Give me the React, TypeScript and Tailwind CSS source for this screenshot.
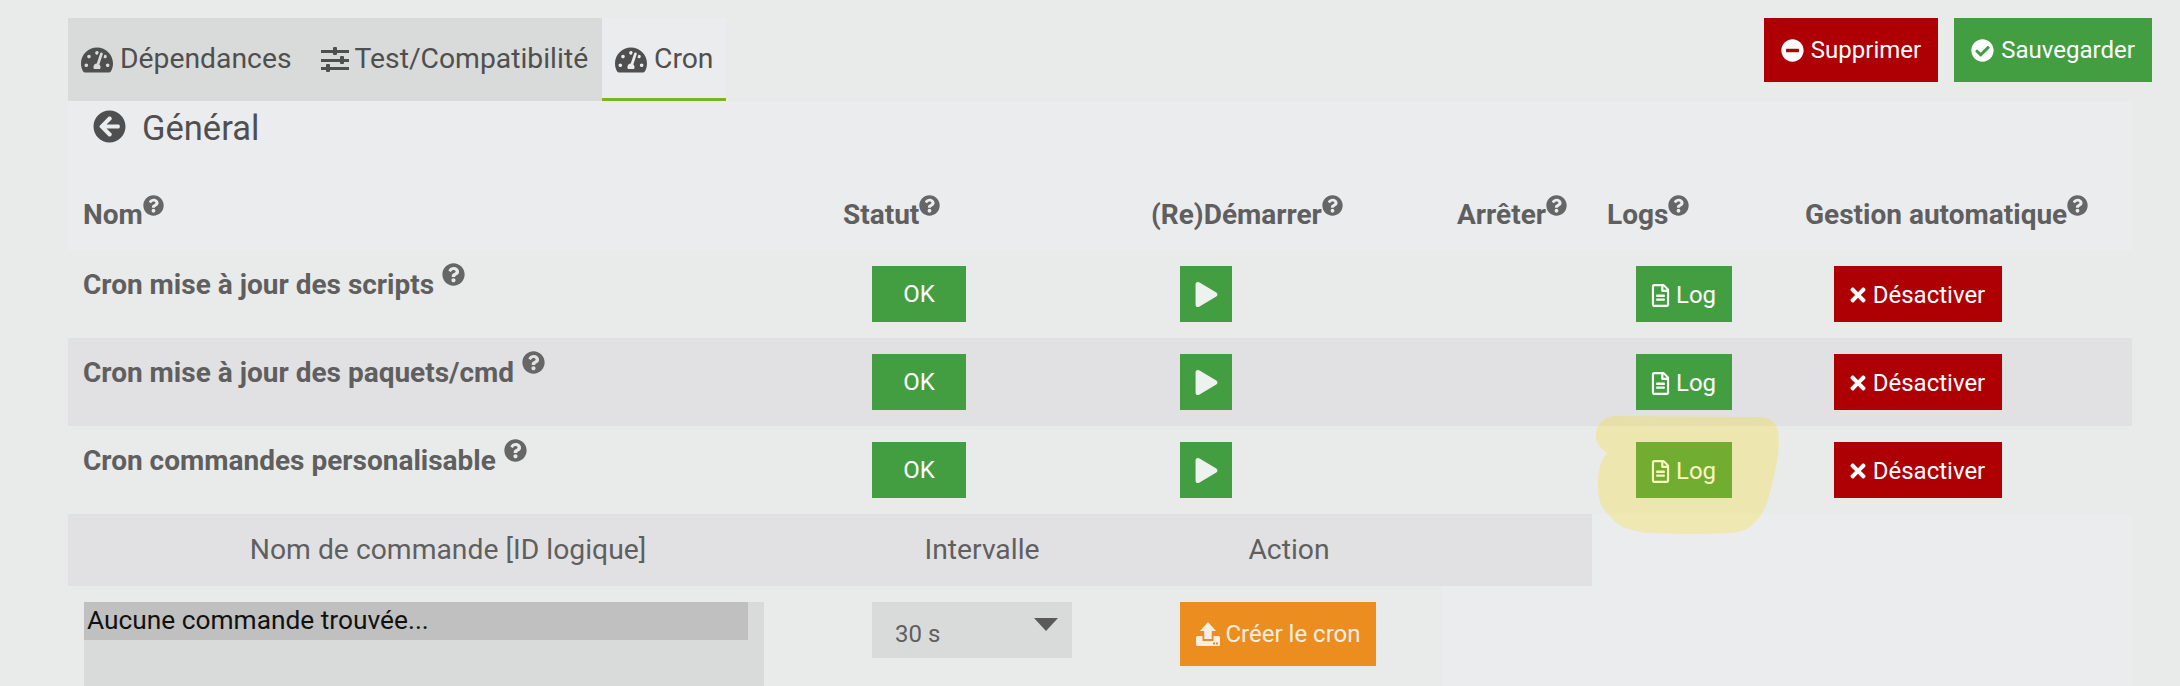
import React from "react";
import {
  FaArrowCircleLeft,
  FaCheckCircle,
  FaMinusCircle,
  FaPlay,
  FaQuestionCircle,
  FaRegFileAlt,
  FaTachometerAlt,
  FaTimes,
} from "react-icons/fa";

const cols = "grid grid-cols-[760px_308px_306px_150px_198px_342px]";

function SlidersIcon() {
  return (
    <svg viewBox="0 0 28 25" className="w-[28px] h-[25px] ml-[29px] mr-[6px]" fill="currentColor">
      <rect x="0" y="3" width="28" height="3" />
      <rect x="12" y="0" width="4" height="8" rx="1" />
      <rect x="0" y="12" width="28" height="3" />
      <rect x="19" y="9" width="4" height="8" rx="1" />
      <rect x="0" y="20" width="28" height="3" />
      <rect x="5" y="17" width="4" height="8" rx="1" />
    </svg>
  );
}

function UploadIcon() {
  return (
    <svg viewBox="0 0 24 24" className="w-[24px] h-[24px]" fill="currentColor">
      <path d="M12 0L20 9H15.7V17H8.3V9H4Z" />
      <path d="M1.5 14H6.5V19H17.5V14H22.5A1.5 1.5 0 0 1 24 15.5V22.5A1.5 1.5 0 0 1 22.5 24H1.5A1.5 1.5 0 0 1 0 22.5V15.5A1.5 1.5 0 0 1 1.5 14Z" />
      <rect x="17" y="20.5" width="2" height="2" fill="#ec8d20" />
      <rect x="20" y="20.5" width="2" height="2" fill="#ec8d20" />
    </svg>
  );
}

function HeadCell({ label, help = true }: { label: string; help?: boolean }) {
  return (
    <div className="flex items-start pl-[15px] pt-[49px] text-[28px] leading-[32px] font-bold text-[#5f5f5f]">
      <span>{label}</span>
      {help && <FaQuestionCircle className="text-[21px] mt-[-4px] text-[#666666]" />}
    </div>
  );
}

function Btn({ className, children }: { className: string; children: React.ReactNode }) {
  return (
    <div className={`flex items-center justify-center h-[56px] text-white text-[24px] ${className}`}>
      {children}
    </div>
  );
}

function CronRow({ name, bg }: { name: string; bg: string }) {
  return (
    <div className={`${cols} h-[88px] ${bg}`}>
      <div className="flex items-start pl-[15px] pt-[19px] text-[28px] leading-[32px] font-bold text-[#5f5f5f]">
        <span>{name}</span>
        <FaQuestionCircle className="text-[23px] ml-[8px] mt-[-6px] text-[#666666]" />
      </div>
      <div className="pl-[44px] pt-[16px]">
        <Btn className="w-[94px] bg-[#439e41]">OK</Btn>
      </div>
      <div className="pl-[44px] pt-[16px]">
        <Btn className="w-[52px] bg-[#439e41]">
          <FaPlay className="text-[25px] text-[#eef2ee]" />
        </Btn>
      </div>
      <div />
      <div className="pl-[44px] pt-[16px]">
        <Btn className="w-[96px] bg-[#439e41] gap-[4px] pr-[3px] pt-[2px]">
          <FaRegFileAlt className="text-[23px]" />
          Log
        </Btn>
      </div>
      <div className="pl-[44px] pt-[16px]">
        <Btn className="w-[168px] bg-[#ae0004] gap-[4px] pr-[4px] pt-[2px]">
          <FaTimes className="text-[22px]" />
          Désactiver
        </Btn>
      </div>
    </div>
  );
}

export default function App() {
  return (
    <div
      className="relative h-[686px] overflow-hidden bg-[#e9ebea] pl-[68px] pr-[28px] pt-[18px]"
      style={{ fontFamily: "Roboto, sans-serif" }}
    >
      <div className="flex justify-between h-[83px]">
        <div className="flex text-[28.3px] text-[#4f4f4f]">
          <div className="flex w-[534px] items-center bg-[#d9dbda] pl-[13px]">
            <FaTachometerAlt className="text-[32px] mr-[7px]" />
            <span>Dépendances</span>
            <SlidersIcon />
            <span>Test/Compatibilité</span>
          </div>
          <div className="flex w-[124px] items-center bg-[#ebecee] pl-[13px] pt-[3px] border-b-[3px] border-[#7ab51d]">
            <FaTachometerAlt className="text-[32px] mr-[7px]" />
            <span>Cron</span>
          </div>
        </div>
        <div className="flex gap-[16px] h-[64px] text-[24px] text-white">
          <div className="flex w-[174px] items-center justify-center gap-[7px] bg-[#ae0004]">
            <FaMinusCircle className="text-[23px]" />
            Supprimer
          </div>
          <div className="flex w-[198px] items-center justify-center gap-[7px] bg-[#439e41]">
            <FaCheckCircle className="text-[23px]" />
            Sauvegarder
          </div>
        </div>
      </div>

      <div className="w-[2064px] bg-[#ebecee]">
        <div className="flex h-[49px] items-start pl-[25px] pt-[9px] text-[34.5px] leading-[36px] text-[#4f4f4f]">
          <FaArrowCircleLeft className="text-[33px] mr-[16px]" />
          <span>Général</span>
        </div>
        <div className={`${cols} h-[100px]`}>
          <HeadCell label="Nom" />
          <HeadCell label="Statut" />
          <HeadCell label="(Re)Démarrer" />
          <HeadCell label="Arrêter" />
          <HeadCell label="Logs" />
          <HeadCell label="Gestion automatique" />
        </div>
        <CronRow name="Cron mise à jour des scripts" bg="bg-[#e9ebea]" />
        <CronRow name="Cron mise à jour des paquets/cmd" bg="bg-[#e1e1e3]" />
        <CronRow name="Cron commandes personalisable" bg="bg-[#e9ebea]" />

        <div className={`${cols} h-[72px] text-[28.3px] text-[#5f5f5f]`}>
          <div className="flex items-center justify-center bg-[#e1e1e3]">Nom de commande [ID logique]</div>
          <div className="flex items-center justify-center bg-[#e1e1e3]">Intervalle</div>
          <div className="flex items-center justify-center bg-[#e1e1e3]">Action</div>
          <div className="bg-[#e1e1e3]" />
        </div>
        <div className={`${cols} h-[100px]`}>
          <div className="bg-[#e9ebea] pl-[16px] pt-[16px]">
            <div className="w-[680px] h-[84px] bg-[#d9dbda]">
              <div className="flex w-[664px] h-[38px] items-center bg-[#c0c0c0] pl-[3px] text-[26.3px] text-[#111111]">
                Aucune commande trouvée...
              </div>
            </div>
          </div>
          <div className="bg-[#e9ebea] pl-[44px] pt-[16px]">
            <div className="flex w-[200px] h-[56px] items-start justify-between bg-[#d9dbda] pl-[23px] pr-[14px] text-[24px] text-[#5f5f5f]">
              <span className="mt-[14px]">30 s</span>
              <svg viewBox="0 0 24 24" className="w-[24px] h-[13px] mt-[16px]" preserveAspectRatio="none">
                <path d="M0 0H24L12 24Z" fill="#5a5a5a" />
              </svg>
            </div>
          </div>
          <div className="bg-[#e9ebea] pl-[44px] pt-[16px]">
            <div className="flex w-[196px] h-[64px] items-center justify-center gap-[6px] bg-[#ec8d20] text-[24px] text-[#f7efe2]">
              <UploadIcon />
              Créer le cron
            </div>
          </div>
        </div>
      </div>

      {/* highlighter stroke drawn over the Log button */}
      <svg className="absolute left-[1590px] top-[410px] w-[195px] h-[130px] pointer-events-none" viewBox="0 0 195 130">
        <path
          d="M25 6 L170 7 C182 7 189 15 189 30 C189 50 184 65 180 83 C176 97 172 104 167 110 C160 119 152 122 140 123 C120 124 85 124 60 123 C40 121 28 117 21 107 C10 97 8 88 8 75 C8 60 10 52 17 43 C10 39 6 32 6 26 C6 16 12 6 25 6Z"
          fill="#fadc00"
          fillOpacity="0.25"
        />
      </svg>
    </div>
  );
}
